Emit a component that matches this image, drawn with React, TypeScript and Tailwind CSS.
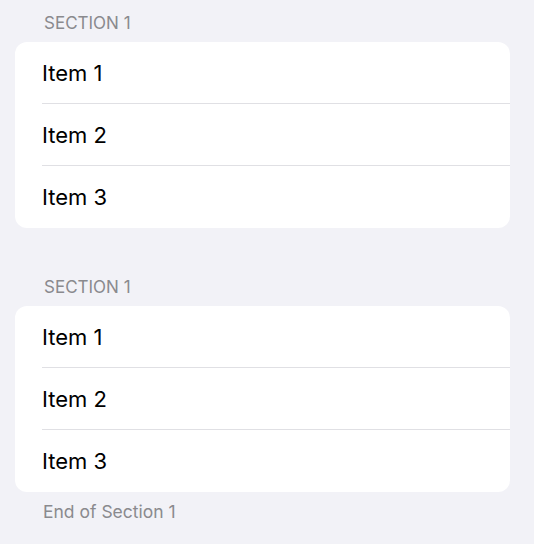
import React from 'react';

interface SectionProps {
  title: string;
  items: string[];
  footer?: string;
}

const Section: React.FC<SectionProps> = ({ title, items, footer }) => {
  return (
    <section>
      <div className="h-[42px] flex items-end pb-[10px] pl-[29px] text-[17px] leading-none uppercase text-[#8a8a8e]">
        {title}
      </div>
      <div className="bg-white rounded-xl overflow-hidden">
        {items.map((item, i) => (
          <div key={i} className="pl-[27px]">
            <div
              className={`h-[62px] flex items-center pt-[1px] text-[22px] text-black ${
                i < items.length - 1 ? 'border-b border-[#e0e0e4]' : ''
              }`}
            >
              {item}
            </div>
          </div>
        ))}
      </div>
      {footer && (
        <div className="pt-[11px] pl-[28px] text-[17.5px] leading-none text-[#8a8a8e]">{footer}</div>
      )}
    </section>
  );
};

export default function App() {
  return (
    <div className="min-h-screen bg-[#f2f2f7] px-[15px] pr-[24px] font-['Inter',sans-serif]">
      <Section title="Section 1" items={['Item 1', 'Item 2', 'Item 3']} />
      <div className="h-[36px]" />
      <Section title="Section 1" items={['Item 1', 'Item 2', 'Item 3']} footer="End of Section 1" />
    </div>
  );
}
